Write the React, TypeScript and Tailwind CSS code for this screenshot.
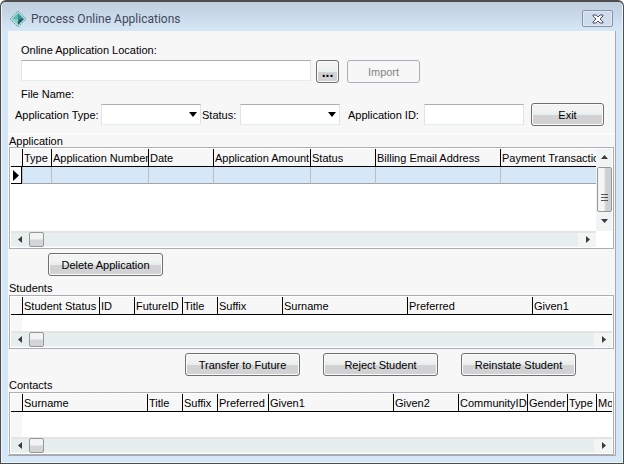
import React from "react";

type Column = { label: string; width?: number };

const applicationColumns: Column[] = [
  { label: "Type", width: 29 },
  { label: "Application Number", width: 97 },
  { label: "Date", width: 65 },
  { label: "Application Amount", width: 97 },
  { label: "Status", width: 65 },
  { label: "Billing Email Address", width: 125 },
  { label: "Payment Transaction" },
];

const studentColumns: Column[] = [
  { label: "Student Status", width: 77 },
  { label: "ID", width: 35 },
  { label: "FutureID", width: 48 },
  { label: "Title", width: 35 },
  { label: "Suffix", width: 65 },
  { label: "Surname", width: 125 },
  { label: "Preferred", width: 125 },
  { label: "Given1" },
];

const contactColumns: Column[] = [
  { label: "Surname", width: 125 },
  { label: "Title", width: 35 },
  { label: "Suffix", width: 35 },
  { label: "Preferred", width: 51 },
  { label: "Given1", width: 125 },
  { label: "Given2", width: 65 },
  { label: "CommunityID", width: 69 },
  { label: "Gender", width: 40 },
  { label: "Type", width: 29 },
  { label: "Mobile" },
];

function AppIcon() {
  return (
    <svg width="18" height="18" viewBox="0 0 18 18" aria-hidden="true">
      <path d="M9 1 17 9 9 17 1 9Z" fill="#b9dedd" stroke="#55a3a0" strokeDasharray="2 1" />
      <path d="M9 3 9 9 3 9Z" fill="#62b5b1" />
      <path d="M9 3 15 9 9 9Z" fill="#2f9791" />
      <path d="M3 9 9 9 9 15Z" fill="#8ccbc6" />
      <path d="M9 9 15 9 9 15Z" fill="#1f5457" />
      <path d="M9 9 12 9 9 12Z" fill="#3c7d7c" />
    </svg>
  );
}

function PushButton({
  children,
  className = "",
  disabled = false,
}: {
  children: React.ReactNode;
  className?: string;
  disabled?: boolean;
}) {
  const look = disabled
    ? "border-[#adadb5] bg-[#f7f7f7] text-[#848484]"
    : "border-[#707070] bg-linear-to-b from-[#f3f3f3] from-25% via-[#e7eeee] via-50% to-[#d2d2d4] to-55% text-black shadow-[inset_0_0_0_1px_#fbfbfb]";
  return (
    <button
      type="button"
      disabled={disabled}
      className={`flex h-[23px] shrink-0 items-center justify-center rounded-[3px] border ${look} ${className}`}
    >
      {children}
    </button>
  );
}

const fieldClass =
  "h-[21px] border border-[#e2e3ea] border-t-[#abadb3] border-b-[#e3efee] bg-white px-1 outline-none";

function ComboBox({ id }: { id: string }) {
  return (
    <div className="relative w-[100px] shrink-0">
      <select id={id} className={`${fieldClass} block w-full appearance-none`} />
      <svg
        className="pointer-events-none absolute top-2 right-1"
        width="8"
        height="5"
        viewBox="0 0 8 5"
        aria-hidden="true"
      >
        <path d="M0 0H8L4 5Z" fill="#000" />
      </svg>
    </div>
  );
}

function ScrollArrow({ direction }: { direction: "left" | "right" | "up" | "down" }) {
  const shapes = {
    left: "M6 1V8L2 4.500Z",
    right: "M3 1V8L7 4.500Z",
    up: "M1 6H8L4.500 2Z",
    down: "M1 3H8L4.500 7Z",
  };
  return (
    <button
      type="button"
      aria-label={`Scroll ${direction}`}
      className="flex h-4 w-[18px] shrink-0 items-center justify-center"
    >
      <svg width="9" height="9" viewBox="0 0 9 9" aria-hidden="true">
        <path d={shapes[direction]} fill="#3a3a3a" />
      </svg>
    </button>
  );
}

function HorizontalScrollbar() {
  return (
    <div className="flex h-4 border-t-2 border-b border-t-[#e4e4e6] border-b-[#eef3f3] bg-[#e7eeee]">
      <div className="flex flex-1 items-center">
        <ScrollArrow direction="left" />
        <div className="h-[15px] w-[15px] rounded-[2px] border border-[#979797] bg-linear-to-b from-[#f3f3f3] from-45% to-[#d4d5d8] to-55%" />
      </div>
      <div className="flex items-center bg-[#f3f5f5]">
        <ScrollArrow direction="right" />
      </div>
    </div>
  );
}

function VerticalScrollbar() {
  return (
    <div className="flex h-[82px] w-4 flex-col items-center bg-[#f0f4f4]">
      <ScrollArrow direction="up" />
      <div className="mt-0.5 flex h-[45px] w-[15px] shrink-0 flex-col items-center gap-0.5 rounded-[2px] border border-[#979797] bg-linear-to-r from-[#f5f5f5] from-45% to-[#cfd0d4] to-60% pt-[26px]">
        <div className="h-px w-[7px] bg-[#555]" />
        <div className="h-px w-[7px] bg-[#555]" />
        <div className="h-px w-[7px] bg-[#555]" />
      </div>
      <ScrollArrow direction="down" />
    </div>
  );
}

function DataTable({ name, columns, selected = false }: { name: string; columns: Column[]; selected?: boolean }) {
  return (
    <table aria-label={name} className="h-full w-full table-fixed border-separate border-spacing-0">
      <colgroup>
        <col className="w-[11px]" />
        {columns.map((col) => (
          <col key={col.label} style={{ width: col.width }} />
        ))}
      </colgroup>
      <thead>
        <tr className="h-[18px] bg-[#f7f7f7]">
          <th className="border-b border-black p-0" />
          {columns.map((col) => (
            <th
              key={col.label}
              scope="col"
              className="overflow-hidden border-b border-l border-black py-0 pr-0 pl-px text-left font-normal whitespace-nowrap"
            >
              {col.label}
            </th>
          ))}
        </tr>
      </thead>
      <tbody>
        {selected && (
          <tr className="h-[17px] bg-[#d6e7f7]">
            <td className="border-r border-b border-black bg-white p-0">
              <svg className="mx-auto block" width="6" height="11" viewBox="0 0 6 11" aria-hidden="true">
                <path d="M0 0 6 5.500 0 11Z" fill="#000" />
              </svg>
            </td>
            {columns.map((col) => (
              <td key={col.label} className="border-b border-l border-b-[#a0a4a8] border-l-[#bdbdbd] p-0" />
            ))}
          </tr>
        )}
        <tr>
          <td className={selected ? "p-0" : "bg-[#f7f7f7] p-0"} />
          <td colSpan={columns.length} className="p-0" />
        </tr>
      </tbody>
    </table>
  );
}

const gridClass = "border border-[#adadb5] bg-white p-px";

export default function App() {
  return (
    <div className="flex min-h-screen flex-col overflow-hidden rounded-t-md border border-t-2 border-[#4d4d4d] bg-[#d6e7f7] px-[7px] pb-[7px] font-['Liberation_Sans',Arial,sans-serif] text-[11px] leading-[14px] text-black shadow-[inset_0_0_0_1px_#eef5fb]">
      <header className="-mx-[6px] flex h-[29px] shrink-0 items-center justify-between bg-linear-to-b from-[#bfcddd] to-[#d6e7f7] pt-1 pr-[9px] pl-[7px]">
        <div className="flex items-center gap-1">
          <AppIcon />
          <h1 className="font-[Roboto,'Liberation_Sans',sans-serif] text-[12px] text-[#42495a]">
            Process Online Applications
          </h1>
        </div>
        <button
          type="button"
          aria-label="Close"
          className="flex h-[17px] w-[31px] items-center justify-center rounded-[2px] border border-[#8592a8] bg-[#cfdceb] shadow-[inset_0_0_0_1px_#dfe9f4]"
        >
          <svg width="12" height="10" viewBox="0 0 12 10" aria-hidden="true">
            <path
              d="M1 1H4L6 3 8 1H11V2L8 5 11 8V9H8L6 7 4 9H1V8L4 5 1 2Z"
              fill="#fff"
              stroke="#4a5060"
            />
          </svg>
        </button>
      </header>

      <main className="flex flex-1 flex-col border-r border-b border-[#a5a9b0] bg-[#f7f7f7]">
        <form className="flex flex-col">
          <div className="flex flex-col px-[13px] pt-3">
            <label htmlFor="location">Online Application Location:</label>
            <div className="mt-[3px] flex items-start">
              <input id="location" type="text" className={`${fieldClass} w-[290px]`} />
              <PushButton className="ml-[5px] w-[23px] text-[14px] leading-none font-bold">...</PushButton>
              <PushButton disabled className="ml-2 w-[73px]">
                Import
              </PushButton>
            </div>
            <p className="mt-1">File Name:</p>
          </div>
          <div className="mt-0.5 flex items-center justify-between pr-[11px] pl-[7px]">
            <div className="flex items-center gap-px">
              <label htmlFor="type" className="w-[85px] whitespace-nowrap">
                Application Type:
              </label>
              <ComboBox id="type" />
              <label htmlFor="status" className="w-[37px] whitespace-nowrap">
                Status:
              </label>
              <ComboBox id="status" />
            </div>
            <div className="flex items-center">
              <label htmlFor="appId" className="w-[76px] whitespace-nowrap">
                Application ID:
              </label>
              <input id="appId" type="text" className={`${fieldClass} w-[100px]`} />
              <PushButton className="ml-[7px] w-[73px]">Exit</PushButton>
            </div>
          </div>
        </form>

        <section className="mt-[7px] border-t border-white px-px">
          <h2 className="h-[13px]">Application</h2>
          <div className={gridClass}>
            <div className="flex">
              <div className="h-[82px] min-w-0 flex-1">
                <DataTable name="Application" columns={applicationColumns} selected />
              </div>
              <VerticalScrollbar />
            </div>
            <div className="mr-4">
              <HorizontalScrollbar />
            </div>
          </div>
          <div className="mt-1 ml-[39px] flex">
            <PushButton className="w-[115px]">Delete Application</PushButton>
          </div>
        </section>

        <section className="mt-[5px] px-px">
          <h2>Students</h2>
          <div className={gridClass}>
            <div className="h-[34px]">
              <DataTable name="Students" columns={studentColumns} />
            </div>
            <HorizontalScrollbar />
          </div>
          <div className="mt-1 mr-[38px] flex justify-end gap-[23px]">
            <PushButton className="w-[115px]">Transfer to Future</PushButton>
            <PushButton className="w-[115px]">Reject Student</PushButton>
            <PushButton className="w-[115px]">Reinstate Student</PushButton>
          </div>
        </section>

        <section className="mt-0.5 px-px">
          <h2>Contacts</h2>
          <div className={gridClass}>
            <div className="h-[43px]">
              <DataTable name="Contacts" columns={contactColumns} />
            </div>
            <HorizontalScrollbar />
          </div>
        </section>
      </main>
    </div>
  );
}
